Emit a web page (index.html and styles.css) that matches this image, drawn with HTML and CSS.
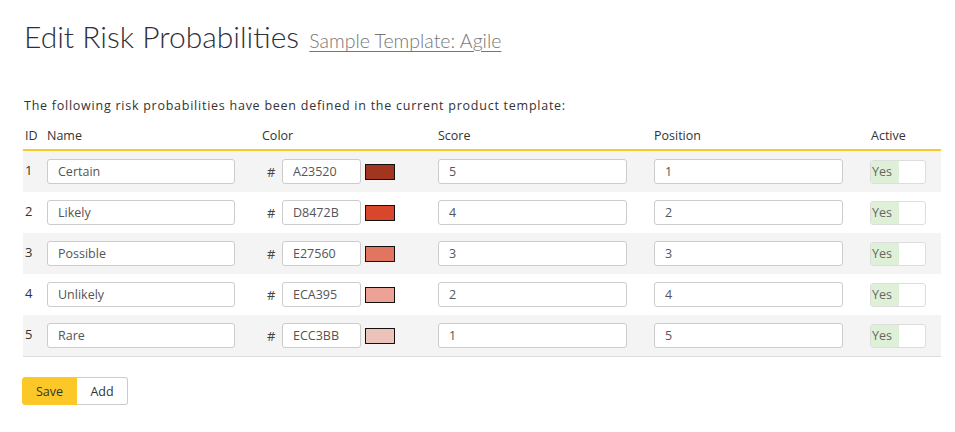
FILE: index.html
```html
<!DOCTYPE html>
<html>
<head>
<meta charset="utf-8">
<link rel="stylesheet" href="styles.css">
</head>
<body>
<div class="page">
  <h1 class="title">Edit Risk Probabilities <a class="sub" href="#">Sample Template: Agile</a></h1>
  <p class="intro">The following risk probabilities have been defined in the current product template:</p>
  <div class="grid">
    <div class="row head">
      <div class="c-id">ID</div>
      <div>Name</div>
      <div>Color</div>
      <div>Score</div>
      <div>Position</div>
      <div>Active</div>
    </div>
    <div class="row alt">
      <div class="c-id">1</div>
      <div><input class="inp w-name" value="Certain"></div>
      <div class="color"><span class="hash">#</span><input class="inp w-col" value="A23520"><span class="sw" style="background:#A23520"></span></div>
      <div><input class="inp w-num" value="5"></div>
      <div><input class="inp w-num" value="1"></div>
      <div><span class="tog"><span class="yes">Yes</span></span></div>
    </div>
    <div class="row">
      <div class="c-id">2</div>
      <div><input class="inp w-name" value="Likely"></div>
      <div class="color"><span class="hash">#</span><input class="inp w-col" value="D8472B"><span class="sw" style="background:#D8472B"></span></div>
      <div><input class="inp w-num" value="4"></div>
      <div><input class="inp w-num" value="2"></div>
      <div><span class="tog"><span class="yes">Yes</span></span></div>
    </div>
    <div class="row alt">
      <div class="c-id">3</div>
      <div><input class="inp w-name" value="Possible"></div>
      <div class="color"><span class="hash">#</span><input class="inp w-col" value="E27560"><span class="sw" style="background:#E27560"></span></div>
      <div><input class="inp w-num" value="3"></div>
      <div><input class="inp w-num" value="3"></div>
      <div><span class="tog"><span class="yes">Yes</span></span></div>
    </div>
    <div class="row">
      <div class="c-id">4</div>
      <div><input class="inp w-name" value="Unlikely"></div>
      <div class="color"><span class="hash">#</span><input class="inp w-col" value="ECA395"><span class="sw" style="background:#ECA395"></span></div>
      <div><input class="inp w-num" value="2"></div>
      <div><input class="inp w-num" value="4"></div>
      <div><span class="tog"><span class="yes">Yes</span></span></div>
    </div>
    <div class="row alt last">
      <div class="c-id">5</div>
      <div><input class="inp w-name" value="Rare"></div>
      <div class="color"><span class="hash">#</span><input class="inp w-col" value="ECC3BB"><span class="sw" style="background:#ECC3BB"></span></div>
      <div><input class="inp w-num" value="1"></div>
      <div><input class="inp w-num" value="5"></div>
      <div><span class="tog"><span class="yes">Yes</span></span></div>
    </div>
  </div>
  <div class="btns">
    <button class="btn save">Save</button><button class="btn add">Add</button>
  </div>
</div>
</body>
</html>
```
FILE: styles.css
```css
html, body {
  margin: 0;
  padding: 0;
  background: #fff;
}
body {
  font-family: "Open Sans", "Noto Sans", sans-serif;
  font-size: 13px;
  color: #333;
}
.page {
  padding: 14px 14px 0 23px;
}
.title {
  margin: 0;
  font-family: "Lato", sans-serif;
  font-weight: 300;
  font-size: 30px;
  line-height: 44px;
  color: #2f2f3a;
  padding-left: 1px;
}
.sub {
  font-size: 19.5px;
  color: #777;
  text-decoration: underline;
  text-underline-offset: 3px;
  margin-left: 2px;
}
.intro {
  margin: 34px 0 0 1px;
  line-height: 18px;
  font-size: 12.5px;
  letter-spacing: 0.75px;
  color: #333;
}
.grid {
  margin-top: 12px;
  width: 918px;
}
.row {
  display: grid;
  grid-template-columns: 24px 215px 176px 216px 217px 70px;
  align-items: center;
  height: 41px;
}
.row.head {
  height: 22px;
  border-bottom: 2px solid #f7c927;
  align-items: start;
  font-size: 12.5px;
  color: #333;
}
.row.alt {
  background: #f4f4f4;
}
.row.last {
  border-bottom: 1px solid #ddd;
}
.c-id {
  padding-left: 2px;
}
.row:not(.head) .c-id {
  align-self: start;
  padding-top: 10px;
}
.inp {
  box-sizing: border-box;
  height: 25px;
  border: 1px solid #ccc;
  border-radius: 3px;
  background: #fff;
  font-family: "Open Sans", "Noto Sans", sans-serif;
  font-size: 12.5px;
  color: #555;
  padding: 0 10px;
  margin: 0;
  display: block;
}
.w-name { width: 188px; }
.w-num { width: 189px; }
.w-col { width: 79px; }
.color {
  display: flex;
  align-items: center;
}
.hash {
  width: 20px;
  padding-left: 5px;
  box-sizing: border-box;
  color: #444;
}
.sw {
  display: block;
  width: 28px;
  height: 14px;
  border: 1px solid #111;
  margin-left: 4px;
}
.tog {
  box-sizing: border-box;
  display: flex;
  width: 56px;
  height: 24px;
  border: 1px solid #ddd;
  border-radius: 3px;
  background: #fff;
  overflow: hidden;
  margin-left: -1px;
}
.yes {
  width: 27px;
  background: #dff0d8;
  color: #666;
  line-height: 22px;
  font-size: 12.5px;
  padding-left: 1px;
}
.btns {
  margin-top: 20px;
  display: flex;
  margin-left: -1px;
}
.btn {
  height: 28px;
  font-family: "Open Sans", "Noto Sans", sans-serif;
  font-size: 12.5px;
  color: #333;
  margin: 0;
  cursor: pointer;
}
.save {
  width: 55px;
  background: #fcc827;
  border: 1px solid #fcc827;
  border-radius: 3px 0 0 3px;
}
.add {
  width: 51px;
  background: #fff;
  border: 1px solid #ccc;
  border-left: none;
  border-radius: 0 3px 3px 0;
}
```
